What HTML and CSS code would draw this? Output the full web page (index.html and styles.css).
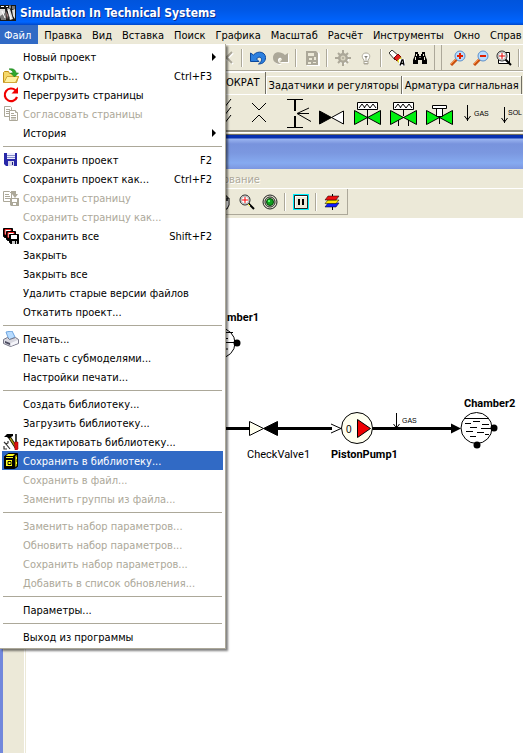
FILE: index.html
```html
<!DOCTYPE html>
<html lang="ru">
<head>
<meta charset="utf-8">
<title>Simulation In Technical Systems</title>
<link rel="stylesheet" href="styles.css">
</head>
<body>
<div class="app">
  <header class="titlebar">
    <svg class="app-icon" viewBox="0 0 16 16" aria-hidden="true"><path fill="#161616" d="M0 0h16v16H0z"/><path fill="#ddd" d="M0 4h5l1 11H2L0 11zM7 3l3 1 3 10-3 1zM12 5l3-1v10l-2-3z"/><path fill="#777" d="M0 11l5-3 1 7H1zM8 7l2 6-1 2zM12 1h3v3h-3z"/><path stroke="#fff" d="M1 1.500h3M6 1.500h2M10 .5v3M2 6l3 7M8 5l3 9"/><path fill="#a88" d="M6 6l2 4-1 5z"/></svg>
    <h1>Simulation In Technical Systems</h1>
  </header>

  <nav class="menubar">
    <div class="menu-root">
      <button class="top-item open">Файл</button>
      <div class="menu" role="menu">
        <button class="item"><span>Новый проект</span><i class="sub"></i></button>
        <button class="item"><svg class="ico" viewBox="0 0 16 16"><path fill="#f5d86c" stroke="#c09018" d="M.5 14.500v-10l1-1h4l1 2h6v3h3l-2 6z"/><path fill="#fff0a0" stroke="#d2a838" d="M1 14.500l3-6h11.500l-3 6z"/><path fill="#2fa82f" stroke="#168016" stroke-width=".6" d="M6 1c4-1 7 1 7 4h2.500l-4 4-4-4H10c0-2-2-3-4-4z"/></svg><span>Открыть...</span><kbd>Ctrl+F3</kbd></button>
        <button class="item"><svg class="ico" viewBox="0 0 16 16"><path fill="none" stroke="#f00000" stroke-width="2.200" d="M12.500 3.300A6.300 6.300 0 1 0 14 10"/><path fill="#f00000" d="M15 0v6.500H8.500z"/></svg><span>Перегрузить страницы</span></button>
        <button class="item" disabled><svg class="ico" viewBox="0 0 16 16"><g fill="#fff" stroke="#aca899"><path d="M1.500.5h6l1 1v9h-7z"/><path d="M3 3.500h4M3 5.500h4M3 7.500h3"/><path d="M6.500 4.500h6l2 2v8h-8z"/><path d="M12.500 4.500v2h2M8 7.500h3M8 9.500h5M8 11.500h5M8 13h5"/></g></svg><span>Согласовать страницы</span></button>
        <button class="item"><span>История</span><i class="sub"></i></button>
        <hr>
        <button class="item"><svg class="ico" viewBox="0 0 16 16"><path fill="#2828a8" d="M1 1h13v13H3l-2-2z"/><path fill="#eef" d="M4 1h8v6H4z"/><path stroke="#8890c8" d="M4 3.500h8M4 5.500h8"/><path fill="#d8d8e8" d="M5 9h6v5H5z"/><path fill="#181880" d="M9 10h1v3H9z"/></svg><span>Сохранить проект</span><kbd>F2</kbd></button>
        <button class="item"><span>Сохранить проект как...</span><kbd>Ctrl+F2</kbd></button>
        <button class="item" disabled><svg class="ico" viewBox="0 0 16 16"><path fill="#fff" stroke="#aca899" d="M.5 1.500h6l2 2v8h-8zM2 4.500h4M2 6.500h5M2 8.500h5"/><path fill="#aca899" d="M8 1h5v3h2l-3 4-3-4H8zM7 8h9v8H8l-1-1z"/><path fill="#fff" d="M9 9h5v3H9zM10 13h3v2h-3z"/></svg><span>Сохранить страницу</span></button>
        <button class="item" disabled><span>Сохранить страницу как...</span></button>
        <button class="item"><svg class="ico" viewBox="0 0 16 16"><path stroke="#000" d="M.5.500h9v9h-8l-1-1z"/><path fill="#fff" stroke="#f02020" d="M2 1.500h6v5H2z"/><path stroke="#000" d="M3.500 3.500h9v9h-8l-1-1z"/><path fill="#fff" stroke="#f02020" d="M5 4.500h6v5H5z"/><path stroke="#000" d="M6.500 6.500h9v9h-8l-1-1z"/><path fill="#fff" d="M8 7h6v4H8z"/><path fill="#ccc" d="M9 13h5v3H9z"/><path d="M12 13h1v3h-1z"/></svg><span>Сохранить все</span><kbd>Shift+F2</kbd></button>
        <button class="item"><span>Закрыть</span></button>
        <button class="item"><span>Закрыть все</span></button>
        <button class="item"><span>Удалить старые версии файлов</span></button>
        <button class="item"><span>Откатить проект...</span></button>
        <hr>
        <button class="item"><svg class="ico" viewBox="0 0 16 16"><path fill="#b8dcff" stroke="#6da4df" d="M3 1l6-1 3 6-6 3z"/><path fill="#d8d8e0" stroke="#777788" d="M.5 8.500l4-2 2 2 6-2 3 2v4l-8 3-7-3z"/><path fill="#4c4c60" d="M2 10l5 2v2l-5-2z"/><path fill="#f5f5fa" d="M8 12l7-3v3l-7 3z"/></svg><span>Печать...</span></button>
        <button class="item"><span>Печать с субмоделями...</span></button>
        <button class="item"><span>Настройки печати...</span></button>
        <hr>
        <button class="item"><span>Создать библиотеку...</span></button>
        <button class="item"><span>Загрузить библиотеку...</span></button>
        <button class="item"><svg class="ico" viewBox="0 0 16 16"><path d="M1 3l3-3h6v2L8 3v2H6L4 3z"/><path stroke="#000" stroke-width="3" d="M7 4l7 11"/><path stroke="#a09010" stroke-width="1.500" d="M7 4l7 11"/><path stroke="#000" stroke-width="1.500" d="M13 0v8"/><path fill="#e01010" stroke="#800" stroke-width=".5" d="M11.500 8h3.500v7l-1 1h-2z"/><path fill="none" stroke="#333" stroke-width="1.200" d="M1 8l2 2 2-1V7M3 10l4 5M1 12v3h3"/></svg><span>Редактировать библиотеку...</span></button>
        <button class="item selected"><svg class="ico" viewBox="0 0 16 16"><path stroke="#000" d="M1.500 3.500l4-3h9v13l-3 2h-10z"/><path fill="#ffff20" d="M3 4h7v1H3zM3 7h6v6H3zM5 1h7l-2 2H3z"/><path fill="#989800" d="M12 3l2-1v11l-2 1z"/><path fill="none" stroke="#000" d="M5 8.500h3v3H5z"/><path fill="#ffff20" d="M13 4h1v2h-1zM13 9h1v2h-1z"/></svg><span>Сохранить в библиотеку...</span></button>
        <button class="item" disabled><span>Сохранить в файл...</span></button>
        <button class="item" disabled><span>Заменить группы из файла...</span></button>
        <hr>
        <button class="item" disabled><span>Заменить набор параметров...</span></button>
        <button class="item" disabled><span>Обновить набор параметров...</span></button>
        <button class="item" disabled><span>Сохранить набор параметров...</span></button>
        <button class="item" disabled><span>Добавить в список обновления...</span></button>
        <hr>
        <button class="item"><span>Параметры...</span></button>
        <hr>
        <button class="item"><span>Выход из программы</span></button>
      </div>
    </div>
    <button class="top-item">Правка</button>
    <button class="top-item">Вид</button>
    <button class="top-item">Вставка</button>
    <button class="top-item">Поиск</button>
    <button class="top-item">Графика</button>
    <button class="top-item">Масштаб</button>
    <button class="top-item">Расчёт</button>
    <button class="top-item">Инструменты</button>
    <button class="top-item">Окно</button>
    <button class="top-item">Справ</button>
  </nav>

  <div class="toolbar">
    <div class="tools main-tools">
      <button class="tool" aria-label="Удалить" disabled><svg viewBox="0 0 16 16"><path fill="none" stroke="#fff" stroke-width="2" d="M3 3l11 11M14 3L3 14"/><path fill="none" stroke="#aca899" stroke-width="2" d="M2 2l11 11M13 2L2 13"/></svg></button>
      <i class="sep"></i>
      <button class="tool" aria-label="Отменить"><svg viewBox="0 0 16 16"><path fill="#2c80e0" stroke="#0c489c" d="M.5 3v8.500H9L6.500 9c2-3 5-2 5 .5 0 2-1 3-3 4.500 4 0 7-2 7-6.500C15.500 2 8 0 3.500 5z"/></svg></button>
      <button class="tool" aria-label="Повторить" disabled><svg viewBox="0 0 16 16"><path fill="#fff" d="M16 4v9H8l2-2.500c-1-3-4-2-4 .5 0 2 1 3 3 4-4 0-8-2-8-6C1 2 9 2 13 6z"/><path fill="#aca899" d="M15 3v9H7l2-2.500c-1-3-4-2-4 .5 0 2 1 3 3 4-4 0-8-2-8-6C0 1 8 1 12 5z"/></svg></button>
      <i class="sep"></i>
      <button class="tool" aria-label="Сохранить" disabled><svg viewBox="0 0 16 16"><path fill="#fff" d="M3 2h11l2 2v12H3z"/><path fill="#aca899" d="M2 1h10l2 2v12H2z"/><path fill="#ece9d8" d="M4 3h6v3H4zM5 8h3v2H5zM10 7h2v3h-2zM4 12h3v2H4zM9 12h3v1H9z"/></svg></button>
      <i class="sep"></i>
      <button class="tool" aria-label="Настройки" disabled><svg viewBox="0 0 16 16"><circle cx="9" cy="9" r="5" fill="#fff"/><path stroke="#aca899" stroke-width="2" d="M8 0v16M0 8h16M3 3l10 10M13 3L3 13"/><circle cx="8" cy="8" r="5" fill="#aca899"/><circle cx="8" cy="8" r="2.500" fill="#d8d4c0"/><circle cx="8" cy="8" r="1" fill="#aca899"/></svg></button>
      <button class="tool" aria-label="Подсказка" disabled><svg viewBox="0 0 16 16"><path fill="#fff" stroke="#aca899" d="M6 10c-3-3-2-7 2-7s5 4 2 7v4H6z"/><path stroke="#aca899" d="M6 11.500h4M6 13.500h4M6.500 6.500L8 8l1.500-1.500M8 8v3"/></svg></button>
      <i class="sep"></i>
      <button class="tool" aria-label="Найти подпись"><svg viewBox="0 0 16 16"><path fill="#fff" stroke="#000" stroke-width=".8" d="M0 3l3-3 7 6-4 4z"/><path fill="#e02020" stroke="#800000" d="M5 8l4-4 3 3-4 4z"/><path fill="#ff4" stroke="#a08000" stroke-width=".5" d="M8 11l4-4v7z"/><path fill="#fff" d="M10 9h6v7h-6z"/><path fill="none" stroke="#000" stroke-width="1.300" d="M11 15.500l2-5.500h1l1 5.500M12 13.500h3"/></svg></button>
      <button class="tool" aria-label="Найти"><svg viewBox="0 0 16 16"><path d="M3 2h3v2h1v2h2V4h1V2h3v3l2 5v4h-5v-4H6v4H1v-4l2-5z"/><path stroke="#ece9d8" d="M4.500 4v2M3.500 7v3M11.500 4v2M12.500 7v3M8 7v1"/></svg></button>
    </div>
    <div class="tools zoom-tools">
      <button class="tool" aria-label="Увеличить"><svg viewBox="0 0 16 16"><path stroke="#c85010" stroke-width="3" d="M1 15l6-6"/><path stroke="#ff9040" d="M1 14l5-5"/><circle cx="10" cy="6" r="5" fill="#b8dcff" stroke="#5c8fca"/><path stroke="#e02000" stroke-width="2" d="M7 6h6M10 3v6"/></svg></button>
      <button class="tool" aria-label="Уменьшить"><svg viewBox="0 0 16 16"><path stroke="#c85010" stroke-width="3" d="M1 15l6-6"/><path stroke="#ff9040" d="M1 14l5-5"/><circle cx="10" cy="6" r="5" fill="#b8dcff" stroke="#5c8fca"/><path stroke="#e02000" stroke-width="2" d="M7 6h6"/></svg></button>
      <button class="tool" aria-label="Вся страница"><svg viewBox="0 0 16 16"><path fill="#fff" stroke="#000" d="M2.500 2.500h11v11h-11z"/><path stroke="#000" stroke-width="2" d="M9 9l6 6"/><circle cx="6" cy="6" r="5" fill="#fff" stroke="#222"/><circle cx="6" cy="6" r="3.800" fill="none" stroke="#b0b0b0"/><path stroke="#e00000" d="M3 6h6M6 3v6"/></svg></button>
      <i class="sep"></i>
    </div>
  </div>

  <div class="tabs" role="tablist">
    <button class="tab active" role="tab">ОКРАТ</button>
    <button class="tab" role="tab">Задатчики и регуляторы</button>
    <button class="tab" role="tab">Арматура сигнальная</button>
  </div>
  <div class="palette">
    <button class="part" aria-label="Клапан"><svg viewBox="205 95 36 36"><path class="ln" d="M231 99l-7 9M231 107l-7 9M231 115l-7 9"/></svg></button>
    <button class="part" aria-label="Дроссель"><svg viewBox="241 95 36 36"><path class="ln" d="M252 103l7 7 7-7M252 122l7-7 7 7"/></svg></button>
    <button class="part" aria-label="Разрыв"><svg viewBox="277 95 36 36"><path class="ln" d="M287 99.500h16M287 127.500h16"/><path fill="none" stroke="#000" stroke-width="2" d="M295 99v12M295 116v11"/><path class="ln" d="M309 108l-12 5.500 14 8M298 113.500h11"/></svg></button>
    <button class="part" aria-label="Обратный клапан"><svg viewBox="313 95 36 36"><path class="ln bk" d="M319.500 111v13l12-6.500z"/><path class="ln wh" d="M343.500 111v13l-12-6.500z"/></svg></button>
    <button class="part" aria-label="Регулятор"><svg viewBox="349 95 36 36"><path class="ln gr" d="M354.500 110.500v14l26-14v14z"/><path class="ln wh" d="M357.500 102.500h20v7h-20z"/><path class="ln" d="M359 108l3-4 3 4M364 108l3-4 3 4M370 108l3-4 3 4M367.500 109v16"/></svg></button>
    <button class="part" aria-label="Двойной регулятор"><svg viewBox="385 95 36 36"><path class="ln gr" d="M390.500 110.500v14l26-14v14z"/><path class="ln wh" d="M393.500 102.500h20v7h-20z"/><path class="ln" d="M395 108l3-4 3 4M400 108l3-4 3 4M406 108l3-4 3 4M403.500 109v7M398.500 120v6M408.500 120v6"/></svg></button>
    <button class="part" aria-label="Задвижка"><svg viewBox="421 95 36 36"><path class="ln gr" d="M426.500 110.500v14l26-14v14z"/><path class="ln wh" d="M432.500 105.500h14v3h-14zM436.500 108.500h6v8h-6z"/><path class="ln" d="M439.500 116v8"/></svg></button>
    <button class="part" aria-label="Газ"><svg viewBox="457 95 36 36"><path class="ln" d="M467.500 105v16M464.500 116l3 4 3-4"/><text x="474" y="116" class="tiny">GAS</text></svg></button>
    <button class="part" aria-label="Раствор"><svg viewBox="493 95 36 36"><path class="ln" d="M504.500 107v16M501.500 118l3 4 3-4"/><text x="508" y="115" class="tiny">SOL</text></svg></button>
  </div>

  <main class="child">
    <div class="child-title"></div>
    <div class="child-menu"><button disabled>ование</button></div>
    <div class="child-bar">
      <div class="tools child-tools">
        <button class="tool" aria-label="Рука"><svg viewBox="0 0 16 16"><path fill="#fff" stroke="#000" d="M1 8l2-1 2 2V2h2v5-6h2v6-5h2v5-3h2v7l-2 4H6z"/></svg></button>
        <button class="tool" aria-label="Лупа"><svg viewBox="0 0 16 16"><path stroke="#000" stroke-width="2" d="M9 9l6 6"/><path stroke="#ff4" d="M9 10l2 2"/><circle cx="6" cy="6" r="5" fill="#fff" stroke="#222"/><circle cx="6" cy="6" r="3.800" fill="none" stroke="#b0b0b0"/><path stroke="#f00" d="M3 6h6M6 3v6"/></svg></button>
        <button class="tool" aria-label="Цель"><svg viewBox="0 0 16 16"><g fill="#e0ded0" stroke="#222"><circle cx="8" cy="8" r="7"/><circle cx="8" cy="8" r="5"/></g><circle cx="8" cy="8" r="3.500" fill="#10a020" stroke="#034808"/><path fill="#50ff60" d="M6 6h2v2H6z"/></svg></button>
        <i class="sep"></i>
        <button class="tool" aria-label="Пауза"><svg viewBox="0 0 16 16"><path fill="#00f0ff" d="M0 0h16v16H0z"/><path fill="#fff" stroke="#222" d="M1.500 1.500h13v13h-13z"/><path fill="#ece9d8" d="M3 3h11v11H3z"/><path stroke="#000" stroke-width="2" d="M6 5v6M10 5v6"/></svg></button>
        <i class="sep"></i>
        <button class="tool" aria-label="Слои"><svg viewBox="0 0 16 16"><path stroke="#000" d="M8.500 0v16"/><g stroke="#000" stroke-width=".5"><path fill="#101cff" d="M1 13l3-4h11l-3 4z"/><path fill="#ffe800" d="M1 9.500L4 6h11l-3 3.500z"/><path fill="#f01010" d="M1 6l3-4h11l-3 4z"/></g></svg></button>
      </div>
    </div>
    <div class="workspace">
      <div class="gutter"></div>
      <svg class="canvas" viewBox="26 219 497 534" preserveAspectRatio="xMinYMin slice">
        <g class="ln">
          <circle cx="220" cy="343" r="15"/>
          <path d="M210 332.500h23M212 338.500h16M222 342.500h14M218 349h10"/>
        </g>
        <circle cx="237" cy="343" r="3.500"/>
        <text x="227" y="321" class="bold">mber1</text>
        <path stroke="#000" stroke-width="3" d="M200 428.500h50M277 428.500h55M372 428.500h80"/>
        <path fill="#fffff0" stroke="#000" d="M249.500 421.500v14l14-7z"/>
        <path stroke="#000" d="M277.500 421.500v14l-14-7z"/>
        <path class="ln" d="M331 424l10 4.500-10 4.500"/>
        <circle cx="357" cy="428" r="15.500" fill="#fffff0" stroke="#000"/>
        <path fill="#f00000" stroke="#000" d="M357.500 419.500v18l13-9z"/>
        <text x="346" y="433" class="zero">0</text>
        <path class="ln" d="M396.500 413v14M393.500 424l3 4 3-4"/>
        <text x="402" y="423" class="tiny">GAS</text>
        <path d="M451 423.500v10l10-5z"/>
        <g class="ln"><circle cx="476.500" cy="428" r="15.500" fill="#fff"/><path d="M465 418.500h24M473 421.500h7M465 423.500h6M482 424.500h7M470 427.500h7M481 428.500h11M466 431.500h7M477 432.500h7M485 434.500h4M470 436.500h6"/></g>
        <circle cx="494" cy="428" r="3.500"/><circle cx="477" cy="445" r="3.500"/>
        <text x="464" y="407" class="bold">Chamber2</text>
        <text x="247" y="458" class="label">CheckValve1</text>
        <text x="331" y="458" class="bold">PistonPump1</text>
      </svg>
    </div>
  </main>
</div>
</body>
</html>
```

FILE: styles.css
```css
* { box-sizing: border-box; }

body {
  margin: 0;
  overflow: hidden;
  background: #ece9d8;
  font: 11px/16px "DejaVu Sans Condensed", "DejaVu Sans", sans-serif;
  color: #000;
}

button {
  margin: 0;
  padding: 0;
  border: 0;
  background: none;
  font: inherit;
  color: inherit;
  white-space: nowrap;
}

svg { display: block; }

.app {
  display: flex;
  flex-direction: column;
  min-height: 100vh;
}

.titlebar {
  display: flex;
  align-items: center;
  gap: 4px;
  height: 25px;
  background: linear-gradient(#0054dc, #0058e6 40%, #0062fa 80%, #0066ff 88%, #0046c8);
}
.app-icon { width: 16px; height: 16px; }
.titlebar h1 {
  margin: 0;
  font: bold 12px/16px "DejaVu Sans Condensed", "DejaVu Sans", sans-serif;
  color: #fff;
  text-shadow: 1px 1px 0 #0a2f90;
}

.menubar {
  display: flex;
  height: 19px;
  white-space: nowrap;
}
.menu-root {
  position: relative;
  margin-right: 1px;
}
.top-item {
  height: 19px;
  padding: 2px 5px 0;
}
.top-item.open {
  padding: 2px 7px 0 4px;
  background: #316ac5;
  color: #fff;
}

.menu {
  position: absolute;
  z-index: 5;
  top: 19px;
  left: 0;
  width: 226px;
  padding: 3px 2px 2px;
  border: solid #aca899;
  border-width: 0 1px 1px 0;
  background: #fff;
  box-shadow: 2px 2px 2px rgba(0, 0, 0, 0.5);
}
.item {
  display: grid;
  grid-template-columns: 21px 1fr auto;
  align-items: center;
  width: 221px;
  height: 19px;
  padding-right: 11px;
  line-height: 17px;
  text-align: left;
}
.item > span { grid-column: 2; grid-row: 1; padding-top: 2px; }
.item kbd { grid-column: 3; font: inherit; padding-top: 2px; }
.item .ico { grid-column: 1; grid-row: 1; width: 16px; height: 16px; margin-left: 1px; }
.item:disabled { color: #aca899; }
.item.selected { background: #316ac5; color: #fff; }
.sub {
  grid-column: 3;
  margin-right: -5px;
  border: solid transparent;
  border-width: 4px 0 4px 4px;
  border-left-color: #000;
}
.menu hr {
  height: 1px;
  margin: 4px 1px 3px;
  border: 0;
  background: #aca899;
}

.toolbar {
  display: flex;
  gap: 6px;
  height: 28px;
  border-top: 1px solid #fff;
  border-bottom: 1px solid #fff;
  box-shadow: inset 0 -1px #aca899;
}
.tools {
  display: flex;
  align-items: center;
}
.main-tools {
  flex: none;
  padding: 0 3px 0 215px;
  border-right: 1px solid #aca899;
}
.zoom-tools {
  padding-left: 4px;
  border-left: 1px solid #aca899;
}
.tool {
  display: grid;
  place-items: center;
  flex: none;
  width: 23px;
  height: 23px;
}
.tool svg { width: 16px; height: 16px; }
.sep {
  flex: none;
  width: 2px;
  height: 18px;
  margin: 0 3px;
  background: linear-gradient(90deg, #aca899 50%, #fff 50%);
}

.tabs {
  display: flex;
  align-items: flex-end;
  height: 22px;
  padding-left: 222px;
}
.tab {
  flex: none;
  height: 18px;
  margin-left: 1px;
  padding: 0 2px;
  border: solid #fff;
  border-width: 1px 0 0 1px;
  box-shadow: 1px 0 #716f64;
}
.tab.active {
  height: 22px;
  margin-left: 0;
  padding: 0 5px 2px 4px;
  border-left: 0;
}

.palette {
  display: flex;
  height: 41px;
  padding: 0 0 0 205px;
  overflow: hidden;
  border-top: 1px solid #fff;
  border-bottom: 1px solid #716f64;
  box-shadow: inset 0 -1px #ece9d8, inset 0 -2px #fff, inset 0 -4px #8d8a7c;
}
.part { flex: none; width: 36px; height: 36px; }
.part svg { width: 36px; height: 36px; }

.ln { fill: none; stroke: #000; stroke-width: 1px; }
.bk { fill: #000; }
.wh { fill: #fff; }
.gr { fill: #00f010; }
.tiny { font: 7px "Liberation Sans", sans-serif; }
.label { font: 11px Roboto, "Liberation Sans", sans-serif; }
.bold { font: bold 11px Roboto, "Liberation Sans", sans-serif; }
.zero { font: 10px "Liberation Sans", sans-serif; }

.child {
  display: flex;
  flex: 1;
  flex-direction: column;
  border-left: 3px solid #7288dc;
}
.child-title {
  height: 34px;
  margin-left: -3px;
  background: linear-gradient(#0831b0 0 3px, #9ab4f0 4px, #7893dd 9px, #7b98e0 18px, #86aaf0 28px, #7c96e0);
}
.child-menu {
  height: 20px;
  padding-left: 220px;
  border-bottom: 1px solid #fff;
}
.child-menu button {
  height: 19px;
  padding-top: 2px;
  color: #aca899;
  text-shadow: 1px 1px #fff;
}
.child-bar {
  display: flex;
  height: 30px;
  border-bottom: 1px solid #fff;
}
.child-tools {
  height: 26px;
  padding: 0 4px 0 209px;
  border: solid #aca899;
  border-width: 0 1px 1px 0;
}
.workspace {
  display: flex;
  flex: 1;
}
.gutter {
  flex: none;
  width: 23px;
  border-right: 1px solid #ece9d8;
  box-shadow: inset -1px 0 #fff;
}
.canvas {
  flex: 1;
  min-width: 0;
  height: 534px;
  background: #fff;
}
```
